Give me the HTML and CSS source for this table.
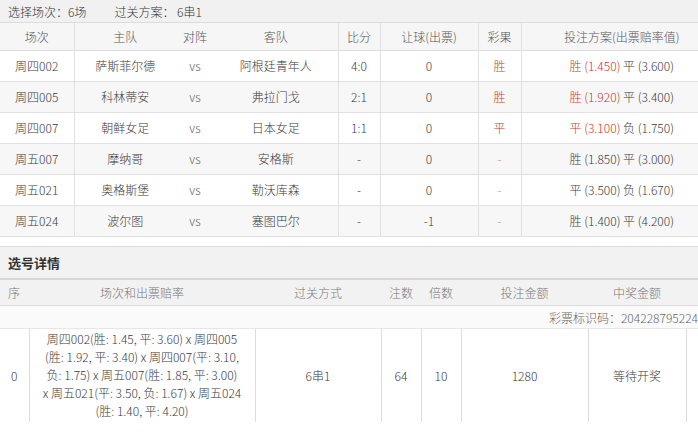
FILE: index.html
```html
<!DOCTYPE html>
<html lang="zh">
<head>
<meta charset="utf-8">
<title>选号详情</title>
<link rel="stylesheet" href="styles.css">
</head>
<body>
<div class="topbar">
  <span>选择场次：6场</span>
  <span>过关方案： 6串1</span>
</div>
<table class="matches">
  <colgroup>
    <col class="c-no"><col class="c-home"><col class="c-vs"><col class="c-away"><col class="c-score"><col class="c-hand"><col class="c-res"><col class="c-plan">
  </colgroup>
  <thead>
    <tr><th class="br">场次</th><th>主队</th><th>对阵</th><th class="br">客队</th><th class="br">比分</th><th class="br">让球(出票)</th><th class="br">彩果</th><th class="plan">投注方案(出票赔率值)</th></tr>
  </thead>
  <tbody>
    <tr><td class="br">周四002</td><td>萨斯菲尔德</td><td class="vs">vs</td><td class="br">阿根廷青年人</td><td class="br">4:0</td><td class="br">0</td><td class="br hit">胜</td><td class="plan"><span class="hit">胜 (1.450)</span> 平 (3.600)</td></tr>
    <tr class="alt"><td class="br">周四005</td><td>科林蒂安</td><td class="vs">vs</td><td class="br">弗拉门戈</td><td class="br">2:1</td><td class="br">0</td><td class="br hit">胜</td><td class="plan"><span class="hit">胜 (1.920)</span> 平 (3.400)</td></tr>
    <tr><td class="br">周四007</td><td>朝鲜女足</td><td class="vs">vs</td><td class="br">日本女足</td><td class="br">1:1</td><td class="br">0</td><td class="br hit">平</td><td class="plan"><span class="hit">平 (3.100)</span> 负 (1.750)</td></tr>
    <tr class="alt"><td class="br">周五007</td><td>摩纳哥</td><td class="vs">vs</td><td class="br">安格斯</td><td class="br">-</td><td class="br">0</td><td class="br dash">-</td><td class="plan">胜 (1.850) 平 (3.000)</td></tr>
    <tr><td class="br">周五021</td><td>奥格斯堡</td><td class="vs">vs</td><td class="br">勒沃库森</td><td class="br">-</td><td class="br">0</td><td class="br dash">-</td><td class="plan">平 (3.500) 负 (1.670)</td></tr>
    <tr class="alt"><td class="br">周五024</td><td>波尔图</td><td class="vs">vs</td><td class="br">塞图巴尔</td><td class="br">-</td><td class="br">-1</td><td class="br dash">-</td><td class="plan">胜 (1.400) 平 (4.200)</td></tr>
  </tbody>
</table>

<div class="section-title">选号详情</div>
<table class="detail">
  <colgroup>
    <col class="d-idx"><col class="d-games"><col class="d-pass"><col class="d-cnt"><col class="d-mul"><col class="d-amt"><col class="d-win"><col class="d-end">
  </colgroup>
  <thead>
    <tr><th class="idx">序</th><th>场次和出票赔率</th><th>过关方式</th><th>注数</th><th>倍数</th><th>投注金额</th><th>中奖金额</th><th></th></tr>
  </thead>
  <tbody>
    <tr class="ident"><td colspan="8">彩票标识码：204228795224</td></tr>
    <tr class="row">
      <td>0</td>
      <td class="games">周四002(胜: 1.45, 平: 3.60) x 周四005<br>(胜: 1.92, 平: 3.40) x 周四007(平: 3.10,<br>负: 1.75) x 周五007(胜: 1.85, 平: 3.00)<br>x 周五021(平: 3.50, 负: 1.67) x 周五024<br>(胜: 1.40, 平: 4.20)</td>
      <td>6串1</td>
      <td>64</td>
      <td>10</td>
      <td>1280</td>
      <td>等待开奖</td>
      <td></td>
    </tr>
  </tbody>
</table>
</body>
</html>
```

FILE: styles.css
```css
* { box-sizing: border-box; }

body {
  margin: 0;
  font-family: "Noto Sans CJK SC", "Liberation Sans", sans-serif;
  font-size: 12px;
  font-weight: 300;
  color: #3a3a3a;
  background: #fff;
}

.topbar {
  height: 23px;
  display: flex;
  align-items: center;
  gap: 28px;
  padding-left: 8px;
  background: #f1f1f1;
  border-bottom: 1px solid #dcdcdc;
  color: #333;
}

table {
  width: 698px;
  border-collapse: collapse;
  table-layout: fixed;
}

.c-no { width: 74px; }
.c-home { width: 102px; }
.c-vs { width: 38px; }
.c-away { width: 124px; }
.c-score { width: 42px; }
.c-hand { width: 98px; }
.c-res { width: 43px; }
.c-plan { width: 177px; }

.matches th {
  height: 27px;
  padding: 0;
  font-weight: 300;
  color: #555;
  background: #f6f6f6;
  border-bottom: 1px solid #dcdcdc;
  text-align: center;
}

.matches td {
  height: 31px;
  padding: 0;
  text-align: center;
  border-bottom: 1px solid #e0e0e0;
  color: #3a3a3a;
}

.matches .br { border-right: 1px solid #e0e0e0; }
.matches .alt td { background: #f7f7f7; }
.matches td.vs { color: #666; }
.matches .plan { padding-left: 24px; }
.matches .hit { color: #c8381c; }
.matches .dash { color: #e08a4c; }

.section-title {
  margin-top: 9px;
  height: 34px;
  display: flex;
  align-items: center;
  padding-left: 8px;
  font-weight: bold;
  font-size: 13px;
  color: #333;
  background: #f2f2f2;
  border-top: 1px solid #dcdcdc;
  border-bottom: 2px solid #d6d6d6;
}

.d-idx { width: 29px; }
.d-games { width: 226px; }
.d-pass { width: 126px; }
.d-cnt { width: 40px; }
.d-mul { width: 40px; }
.d-amt { width: 127px; }
.d-win { width: 98px; }
.d-end { width: 12px; }

.detail th {
  height: 26px;
  padding: 0;
  font-weight: 300;
  color: #777;
  background: #f2f2f2;
  border-bottom: 1px solid #dcdcdc;
  text-align: center;
}

.detail th.idx {
  text-align: left;
  padding-left: 8px;
}

.detail .ident td {
  height: 23px;
  padding: 0;
  text-align: right;
  color: #666;
  background: #fafafa;
  border-bottom: 1px solid #e6e6e6;
}

.detail .row td {
  padding: 1px 0;
  text-align: center;
  color: #3a3a3a;
  border-left: 1px solid #dcdcdc;
}

.detail .row td:first-child { border-left: none; }

.detail .row td.games {
  padding: 1px 2px 2px;
  line-height: 18px;
}
```
